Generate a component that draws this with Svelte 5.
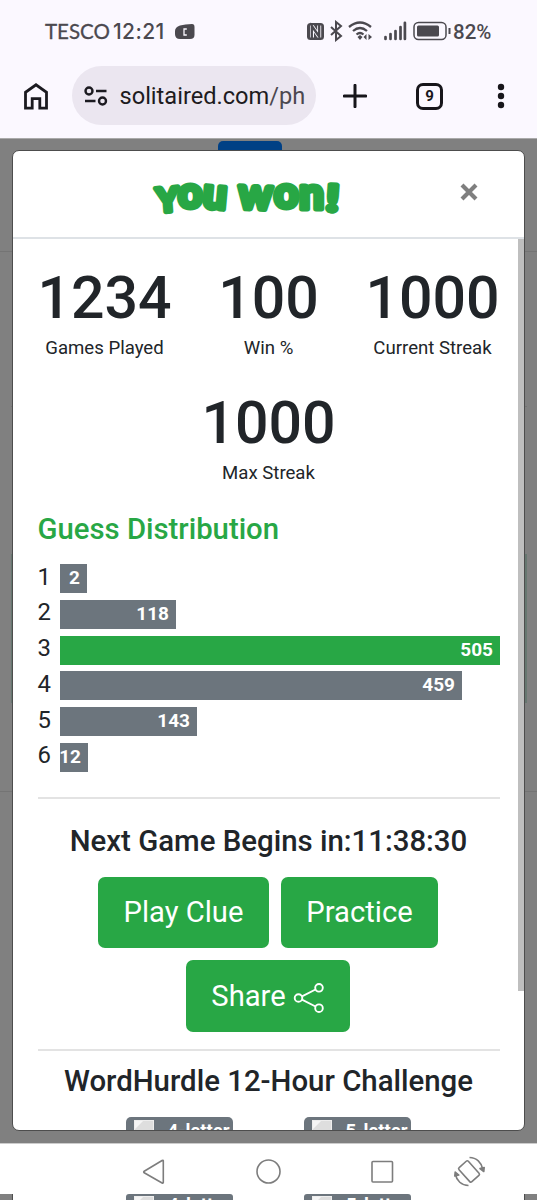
<script>
  const stats = [
    { value: '1234', label: 'Games Played' },
    { value: '100', label: 'Win %' },
    { value: '1000', label: 'Current Streak' },
    { value: '1000', label: 'Max Streak' },
  ];
  const guesses = [
    { n: 1, count: 2, width: 27 },
    { n: 2, count: 118, width: 116 },
    { n: 3, count: 505, width: 440, current: true },
    { n: 4, count: 459, width: 402 },
    { n: 5, count: 143, width: 137 },
    { n: 6, count: 12, width: 28 },
  ];
  // Each letter of the title: left edge, baseline, advance, size, tilt
  const title = [
    { c: 'Y', x: 9.5, y: 36.5, w: 22, s: 33, r: -4 },
    { c: 'o', x: 31, y: 33, w: 24.5, s: 43, r: 0 },
    { c: 'u', x: 56, y: 33.5, w: 24, s: 43, r: 5 },
    { c: 'w', x: 91.500, y: 34, w: 34, s: 44, r: 2 },
    { c: 'o', x: 127, y: 33, w: 24.5, s: 43, r: 0 },
    { c: 'n', x: 152, y: 34, w: 25, s: 44, r: 0 },
    { c: '!', x: 179, y: 36, w: 13, s: 36, r: 4 },
  ];
  const levels = ['4-letter', '5-letter'];
</script>

{#snippet levelButtons()}
  <div class="levels">
    {#each levels as level}
      <div class="level"><i></i><span>{level}</span></div>
    {/each}
  </div>
{/snippet}

<div class="screen">
  <header>
    <div class="status">
      <span class="carrier">TESCO</span><span class="clock">12:21</span>
      <svg class="badge" width="20" height="16" viewBox="0 0 20 16"><path d="M5 1.5 Q10 0 17 0 Q19.5 0 19.5 3V11Q19.5 15 15 15H5Q0 15 0 10V7Q0 3 5 1.5Z" fill="#4b494f"/><path d="M11.800 5H9v6h2.800" fill="none" stroke="#fbf8ff" stroke-width="1.300"/></svg>
      <svg class="signals" width="147" height="22" viewBox="0 0 147 22">
        <rect x="0" y="3" width="17" height="17" rx="3.5" fill="#4b494f"/>
        <path d="M5 17.500V5.500M5 6l7 10.500M12.200 17.500v-12" fill="none" stroke="#fbf8ff" stroke-width="4"/>
        <path d="M4.800 18V6l7.400 10.500V5" fill="none" stroke="#4b494f" stroke-width="2.300"/>
        <path d="M24 7l10 9-5 4V2l5 4-10 9" fill="none" stroke="#4b494f" stroke-width="2"/>
        <g fill="none" stroke="#4b494f" stroke-width="2.3"><path d="M42 7q11-9 22 0M46 11q7-6 14 0M49.500 14.500q3.500-3 7 0"/></g>
        <path d="M50.500 17l2.500-2 2.500 2-2.500 3zM59.500 14v6l-3-3zM61.500 14v6l3.500-3z" fill="#4b494f"/>
        <path d="M78.500 17v2M83.500 14v5M88.500 11v8M93.500 7v12M97.900 2.800V19" stroke="#4b494f" stroke-width="2.700" stroke-linecap="round"/>
        <rect x="107" y="2.500" width="32" height="17" rx="4.500" fill="none" stroke="#4b494f" stroke-width="1.500"/>
        <rect x="110" y="5.500" width="22" height="11" rx="1.500" fill="#4b494f"/>
        <path d="M142.500 8v6" stroke="#4b494f" stroke-width="2"/>
      </svg>
      <span class="percent">82%</span>
    </div>
    <div class="toolbar">
      <svg class="home" width="24" height="27" viewBox="0 0 24 27"><path d="M1.500 25.200V9.300L12 1.800l10.500 7.500v15.900h-6.700v-9.500H8.200v9.500z" fill="none" stroke="#1b1a20" stroke-width="2.800"/></svg>
      <div class="address">
        <svg width="24" height="20" viewBox="0 0 24 20"><g fill="none" stroke="#1b1a20" stroke-width="2.400"><circle cx="5" cy="5" r="3.500"/><circle cx="18.500" cy="15" r="3.500"/><path d="M12 5h10.500M1 15h10.500"/></g></svg>
        <span class="url">solitaired.com<em>/ph</em></span>
      </div>
      <svg class="plus" width="24" height="24" viewBox="0 0 24 24"><path d="M12 1.300v21.400M1.300 12h21.400" stroke="#17161b" stroke-width="3" stroke-linecap="round"/></svg>
      <div class="tabs">9</div>
      <svg class="more" width="8" height="26" viewBox="0 0 8 26"><circle cx="4" cy="4" r="3.200"/><circle cx="4" cy="13" r="3.200"/><circle cx="4" cy="22" r="3.200"/></svg>
    </div>
  </header>

  <main>
    <div class="behind">
      <div class="tab-blue"></div>
      <div class="line l1"></div><div class="line l2"></div><div class="line l3"></div>
      <div class="field"></div>
    </div>
    <section class="modal">
      <div class="modal-head">
        <h1>
          <svg width="200" height="46" viewBox="0 0 200 46">
            {#each title as t}
              <text x={t.x} y={t.y} font-size={t.s} textLength={t.w} lengthAdjust="spacingAndGlyphs" transform="rotate({t.r} {t.x + t.w / 2} {t.y - 12})">{t.c}</text>
            {/each}
          </svg>
        </h1>
        <svg class="close" width="18" height="18" viewBox="0 0 18 18"><path d="M2 2l14 14M16 2L2 16" stroke="#7f7f7f" stroke-width="4.200"/></svg>
      </div>
      <div class="modal-body">
        <div class="scrollbar"></div>
        <div class="stats">
          {#each stats as s}
            <div class="stat"><strong>{s.value}</strong><span>{s.label}</span></div>
          {/each}
        </div>
        <h2>Guess Distribution</h2>
        <div class="chart">
          {#each guesses as g}
            <div class="guess">
              <span class="num">{g.n}</span>
              <div class="bar" class:current={g.current} style:width="{g.width}px">{g.count}</div>
            </div>
          {/each}
        </div>
        <hr />
        <h3 class="next">Next Game Begins in:11:38:30</h3>
        <div class="actions">
          <button class="clue">Play Clue</button>
          <button class="practice">Practice</button>
          <button class="share">Share
            <svg width="32" height="32" viewBox="0 0 32 32"><g fill="none" stroke="#fff" stroke-width="1.900"><circle cx="5.500" cy="16" r="3.800"/><circle cx="26" cy="5.800" r="3.800"/><circle cx="26" cy="26.200" r="3.800"/><path d="M9 14.300l13.500-6.800M9 17.700l13.500 6.800"/></g></svg>
          </button>
        </div>
        <hr class="second" />
        <h3 class="challenge">WordHurdle 12-Hour Challenge</h3>
        {@render levelButtons()}
      </div>
    </section>
  </main>

  <nav>
    <svg width="537" height="50" viewBox="0 0 537 50"><g fill="none" stroke="#7d7d7d" stroke-width="1.600" stroke-linejoin="round">
      <path d="M163.300 17v21.500q0 1-1.200.5L144.200 28.800q-1-.8 0-1.600L162.100 16.500q1.200-.7 1.200.3z"/>
      <circle cx="268.500" cy="27.500" r="11.500"/>
      <rect x="372" y="17.500" width="20.500" height="20.500" rx="1"/>
      <rect x="462.800" y="18" width="12.500" height="19" rx="1.500" transform="rotate(-42 469 27.500)"/>
      <path d="M469.500 13.500c7 0 12 5 13.200 11.500M468.500 41.500c-7 0-12-5-13-11"/>
      <path d="M480 24.500l3.800 3 .4-4zM454.800 32l.4-4 3.600 3z" fill="#7d7d7d"/>
    </g></svg>
  </nav>
  <div class="under"><div class="peek">{@render levelButtons()}</div></div>
</div>

<style>
  :global(body) { margin: 0; background: #fff; }
  * { box-sizing: border-box; }
  .screen { width: 537px; height: 1200px; overflow: hidden; display: flex; flex-direction: column; font-family: Roboto, sans-serif; color: #212529; }
  header { height: 138px; flex: none; background: #fbf8ff; }
  .status { height: 64px; display: flex; align-items: center; padding-left: 45px; color: #4b494f; white-space: nowrap; }
  .carrier { width: 68px; font: 400 20.500px/24px Lato, sans-serif; -webkit-text-stroke: .3px #4b494f; margin-top: -2px; }
  .clock { width: 62px; font: 500 21px/24px Inter, sans-serif; letter-spacing: .4px; margin-top: -1px; }
  .badge { flex: none; }
  .signals { margin-left: 112px; margin-top: -2px; flex: none; }
  .percent { font: 500 20.500px/24px Roboto, sans-serif; margin-top: -1px; margin-left: -1px; }
  .toolbar { height: 64px; display: flex; align-items: center; }
  .home { margin-left: 24px; flex: none; }
  .address { margin-left: 23.500px; width: 244.500px; height: 59px; border-radius: 30px; background: #ebe6f0; display: flex; align-items: center; padding-left: 12px; flex: none; margin-top: -1px; }
  .url { margin-left: 12px; font-size: 23.600px; color: #1d1b20; white-space: nowrap; }
  .url em { font-style: normal; color: #4b484f; }
  .plus { margin-left: 27px; flex: none; }
  .tabs { margin-left: 49px; width: 27px; height: 27px; border: 3px solid #17161b; border-radius: 7px; font: 700 15px/20px Roboto, sans-serif; text-align: center; color: #17161b; flex: none; }
  .more { margin-left: 54px; flex: none; fill: #17161b; }

  main { position: relative; height: 1005px; flex: none; background: #808080; border-top: 1px solid #aaa; padding: 11px 12px 0; }
  .behind { position: absolute; inset: 0; }
  .tab-blue { position: absolute; left: 218px; top: 2px; width: 64px; height: 20px; border-radius: 5px; background: #004085; }
  .line { position: absolute; left: 0; right: 0; height: 1px; background: #747474; }
  .l1 { top: 112px; }
  .l2 { top: 267px; left: 11px; right: 10px; }
  .l3 { top: 652px; }
  .field { position: absolute; left: 11px; right: 10px; top: 415px; height: 149px; background: #667770; }
  .modal { position: relative; width: 512.500px; height: 981px; border: 1px solid #4d4d4d; border-radius: 7px; background: #fff; overflow: hidden; }
  .modal-head { height: 88px; border-bottom: 2px solid #dee2e6; display: flex; align-items: center; position: relative; }
  h1 { margin: 7px 0 0 134px; width: 200px; height: 46px; }
  h1 svg { display: block; font-family: Lato, sans-serif; font-weight: 900; fill: #28a745; stroke: #28a745; stroke-width: 5px; stroke-linejoin: round; }
  .close { margin-left: 113px; margin-top: -4px; }
  .modal-body { position: relative; height: 891px; padding: 23px 24px 0 24.500px; }
  .scrollbar { position: absolute; right: 0; top: 0; width: 6px; height: 752px; background: #bfbfbf; }
  .stats { display: flex; flex-wrap: wrap; justify-content: center; column-gap: 31px; width: 462px; height: 249px; }
  .stat { width: 133px; height: 124px; display: flex; flex-direction: column; align-items: center; }
  .stat strong { font-weight: 500; font-size: 59px; line-height: 72px; white-space: nowrap; }
  .stat span { font-size: 18.600px; line-height: 29px; white-space: nowrap; }
  h2 { margin: 0; font-weight: 500; font-size: 29.300px; line-height: 36px; color: #28a745; }
  .chart { padding-top: 17px; display: grid; gap: 6.800px; }
  .guess { height: 29px; display: flex; align-items: center; }
  .num { width: 22.500px; font-size: 23.900px; line-height: 26px; margin-top: -4px; }
  .bar { height: 29px; padding-right: 7px; background: #6c757d; color: #fff; font-weight: 700; font-size: 19px; line-height: 28px; display: flex; justify-content: flex-end; }
  .bar.current { background: #28a745; }
  hr { margin: 25px 0 0; border: 0; height: 2px; width: 462px; background: #e3e3e3; }
  h3 { margin: 0; font-weight: 500; font-size: 29.400px; line-height: 36px; width: 462px; text-align: center; white-space: nowrap; }
  .next { margin-top: 24px; }
  .actions { margin-top: 18px; display: flex; flex-wrap: wrap; gap: 12px; justify-content: center; width: 461px; }
  button { height: 71.500px; padding: 0; border: 0; border-radius: 7px; background: #28a745; color: #fff; font: 400 29.200px/71px Roboto, sans-serif; display: flex; align-items: center; justify-content: center; }
  .clue { width: 171px; } .practice { width: 157px; } .share { width: 164px; gap: 7px; }
  .share svg { margin-top: 4px; }
  .second { margin-top: 17px; }
  .challenge { margin-top: 12px; }
  .levels { display: flex; gap: 71px; margin: 18px 0 0 88px; }
  .level { width: 107px; height: 40px; flex: none; border-radius: 5px; background: #6c757d; color: #fff; display: flex; padding: 3px 0 0 8px; font: 700 18.500px/22px Roboto, sans-serif; }
  .level i { width: 20px; height: 20px; background: linear-gradient(135deg, #f5f5f5 20%, #dedede 25%); border: 1px solid #eee; }
  .level span { margin-left: 14px; white-space: nowrap; }
  nav { height: 51px; flex: none; background: #fff; border-top: 1px solid #ccc; }
  nav svg { display: block; }
  .under { height: 6px; flex: none; background: #808080; padding: 0 12px; overflow: hidden; }
  .peek { height: 6px; background: #fff; border: solid #4d4d4d; border-width: 0 1px; overflow: hidden; }
  .peek .levels { margin: 0 0 0 113px; }
  .peek .level { padding-top: 2px; line-height: 18px; border-radius: 3px 3px 0 0; }
</style>
